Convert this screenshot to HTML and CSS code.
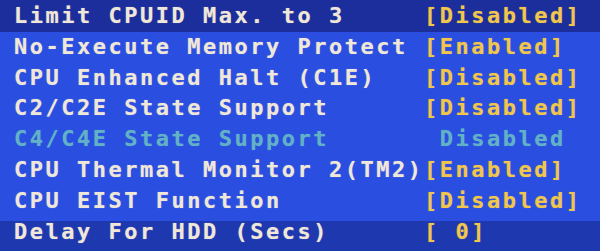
FILE: index.html
```html
<!DOCTYPE html>
<html>
<head>
<meta charset="utf-8">
<link rel="stylesheet" href="styles.css">
</head>
<body>
<div class="screen">
  <div class="row"><span class="label">Limit CPUID Max. to 3</span><span class="value">[Disabled]</span></div>
  <div class="row"><span class="label">No-Execute Memory Protect</span><span class="value">[Enabled]</span></div>
  <div class="row"><span class="label">CPU Enhanced Halt (C1E)</span><span class="value">[Disabled]</span></div>
  <div class="row"><span class="label">C2/C2E State Support</span><span class="value">[Disabled]</span></div>
  <div class="row locked"><span class="label">C4/C4E State Support</span><span class="value"> Disabled</span></div>
  <div class="row"><span class="label">CPU Thermal Monitor 2(TM2)</span><span class="value">[Enabled]</span></div>
  <div class="row"><span class="label">CPU EIST Function</span><span class="value">[Disabled]</span></div>
  <div class="row"><span class="label">Delay For HDD (Secs)</span><span class="value">[ 0]</span></div>
</div>
</body>
</html>
```
FILE: styles.css
```css
html, body {
  margin: 0;
  padding: 0;
}
body {
  width: 600px;
  height: 251px;
  overflow: hidden;
  background: #1f3cb8;
}
.screen {
  height: 251px;
  padding: 1px 0 0 14px;
  box-sizing: border-box;
  background: linear-gradient(to bottom,
    #1b2e9c 0, #1b2e9c 32px,
    #2a4fe0 32px, #2a4fe0 221px,
    #1e38b0 221px, #1e38b0 100%);
  font-family: "DejaVu Sans Mono", monospace;
  font-weight: bold;
  font-size: 22px;
  letter-spacing: 2.5px;
  line-height: 30.8px;
}
.row {
  display: grid;
  grid-template-columns: 410px auto;
  height: 30.8px;
}
.label,
.value {
  white-space: pre;
}
.label {
  color: #efe7d8;
  text-shadow: 0 0 1px rgba(255, 240, 220, 0.5);
}
.value {
  color: #f0c64c;
  text-shadow: 0 0 1px rgba(255, 210, 90, 0.5);
}
.locked .label,
.locked .value {
  color: #62b2c6;
  text-shadow: 0 0 1px rgba(120, 200, 220, 0.4);
}
```
